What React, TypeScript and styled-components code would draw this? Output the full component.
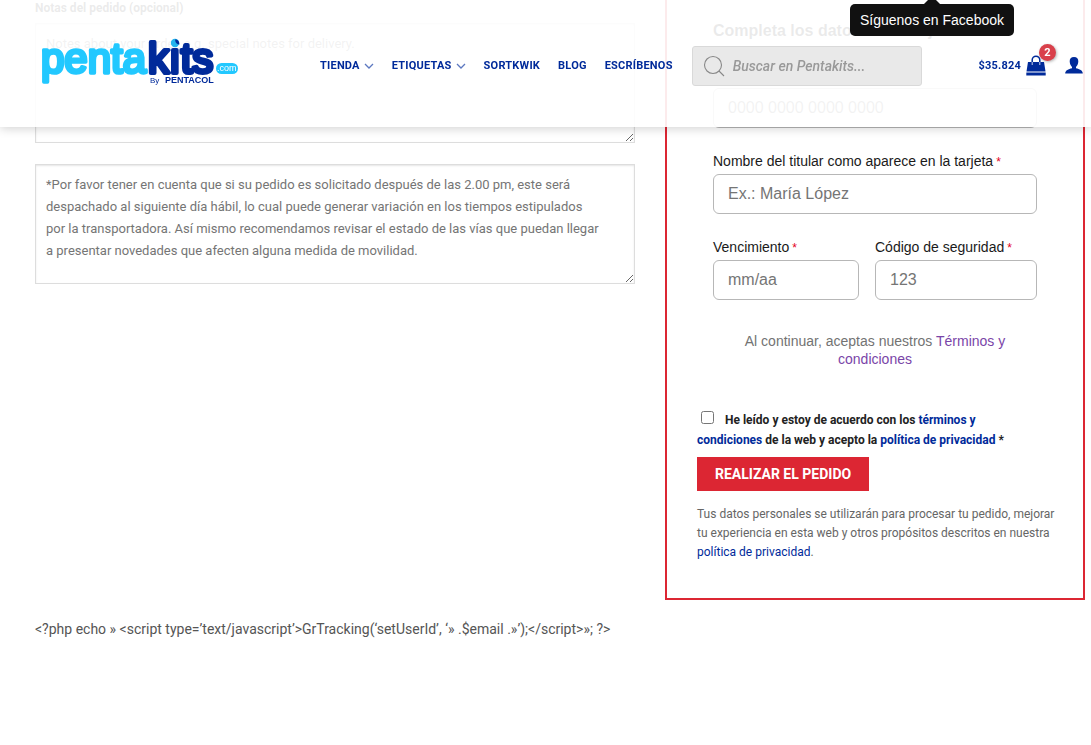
import React from "react";
import styled, { createGlobalStyle } from "styled-components";

const navy = "#002a9a";
const red = "#dc2633";
const sans = `"Liberation Sans", Arial, sans-serif`;

const GlobalStyle = createGlobalStyle`
  *, *::before, *::after { box-sizing: border-box; }
  body {
    margin: 0;
    background: #fff;
    color: #666;
    font: 14px/22px Roboto, sans-serif;
  }
  a { color: ${navy}; text-decoration: none; }
`;

const Header = styled.header`
  position: fixed;
  inset: 0 0 auto 0;
  z-index: 2;
  height: 127px;
  padding: 4px 8px 0 41px;
  display: flex;
  align-items: center;
  background: rgba(255, 255, 255, 0.91);
  box-shadow: 0 1px 10px rgba(0, 0, 0, 0.2);
`;

const LogoLink = styled.a`
  flex: none;
  width: 200px;
  height: 55px;
  margin-right: 79px;
  svg { display: block; overflow: visible; }
`;

const Nav = styled.nav`
  display: flex;
  gap: 18px;
`;

const NavLink = styled.a`
  display: flex;
  align-items: center;
  gap: 4px;
  font-size: 11px;
  line-height: 16px;
  font-weight: 700;
  letter-spacing: 0.02em;
  white-space: nowrap;
`;

const Search = styled.form`
  flex: none;
  display: flex;
  align-items: center;
  gap: 8px;
  width: 230px;
  height: 40px;
  margin-left: 19px;
  padding: 0 10px;
  background: #e9e9e9;
  border: 1px solid #d9d9d9;
  border-radius: 3px;
`;

const SearchInput = styled.input`
  flex: 1;
  min-width: 0;
  border: 0;
  padding: 0;
  background: transparent;
  font: italic 500 14px/20px Roboto, sans-serif;
  &::placeholder { color: #999; opacity: 1; }
`;

const Account = styled.div`
  display: flex;
  align-items: center;
  gap: 19px;
  margin-left: auto;
  svg { display: block; }
`;

const Cart = styled.a`
  position: relative;
  display: flex;
  align-items: center;
  gap: 5px;
  font-size: 11px;
  font-weight: 700;
  letter-spacing: 0.02em;
`;

const Badge = styled.span`
  position: absolute;
  top: -11px;
  right: -10px;
  width: 17px;
  height: 17px;
  border-radius: 50%;
  background: #d9404b;
  box-shadow: 1px 1px 3px rgba(0, 0, 0, 0.3);
  color: #fff;
  font-size: 11px;
  line-height: 17px;
  text-align: center;
`;

const Tooltip = styled.div`
  position: fixed;
  top: 4px;
  right: 77px;
  z-index: 3;
  padding: 5px 10px;
  border-radius: 5px;
  background: #111;
  color: #fff;
  font: 14px/22px ${sans};
  &::before {
    content: "";
    position: absolute;
    left: 50%;
    top: -8px;
    margin-left: -8px;
    border: 8px solid transparent;
    border-top: 0;
    border-bottom-color: #111;
  }
`;

const Columns = styled.main`
  display: grid;
  grid-template-columns: minmax(0, 1fr) 420px;
  gap: 30px;
  padding: 0 6px 0 35px;
`;

const Notes = styled.section`
  display: flex;
  flex-direction: column;
`;

const NotesLabel = styled.label`
  font-size: 12px;
  line-height: 16px;
  font-weight: 700;
  color: #222;
  margin-bottom: 7px;
`;

const NotesArea = styled.textarea`
  display: block;
  width: 100%;
  height: 120px;
  margin-bottom: 21px;
  padding: 9px 10px;
  border: 1px solid #ddd;
  border-radius: 0;
  box-shadow: inset 0 1px 2px rgba(0, 0, 0, 0.1);
  background: #fff;
  font: 13px/22px Roboto, sans-serif;
  resize: vertical;
  &::placeholder { color: #757575; }
`;

const OrderBox = styled.section`
  padding: 0 30px 36px;
  border: 2px solid ${red};
  border-top: 0;
`;

const Card = styled.div`
  padding: 20px 16px 0;
  font: 14px/18px ${sans};
  color: #1a1a1a;
`;

const CardTitle = styled.h3`
  margin: 0 0 47px;
  font-size: 16px;
  line-height: 21px;
  font-weight: 700;
  white-space: nowrap;
`;

const Field = styled.div`
  display: flex;
  flex-direction: column;
  gap: 4px;
  margin-bottom: 24px;
`;

const Pair = styled.div`
  display: grid;
  grid-template-columns: 146px 1fr;
  gap: 16px;
`;

const Required = styled.span`
  margin-left: 3px;
  color: #e3001b;
  font-size: 12px;
  line-height: 1;
`;

const CardInput = styled.input`
  width: 100%;
  height: 40px;
  padding: 0 14px;
  border: 1px solid #b7b7b7;
  border-radius: 6px;
  background: #fff;
  font: 16px/20px ${sans};
  &::placeholder { color: #757575; opacity: 1; }
`;

const CardTerms = styled.p`
  margin: 8px 0 0;
  padding: 0 24px;
  text-align: center;
  color: #737373;
  a { color: #7a45a8; }
`;

const Accept = styled.label`
  display: block;
  margin-top: 42px;
  padding-right: 40px;
  font-size: 12px;
  line-height: 20px;
  font-weight: 700;
  color: #222;
`;

const Check = styled.input`
  width: 13px;
  height: 13px;
  margin: 0 11px 0 4px;
`;

const OrderButton = styled.button`
  display: block;
  height: 34px;
  margin: 7px 0 14px;
  padding: 0 18px;
  border: 0;
  background: ${red};
  color: #fff;
  font: 700 14px/34px Roboto, sans-serif;
`;

const Privacy = styled.p`
  margin: 0 -4px 0 0;
  font-size: 12px;
  line-height: 19px;
`;

const Trace = styled.p`
  margin: 18px 0 0;
  padding: 0 35px;
  color: #555;
`;

const Logo = () => (
  <svg width="200" height="55" viewBox="0 0 200 55" role="img" aria-label="Pentakits">
    <g fontFamily="Liberation Sans, Arial, sans-serif" strokeLinejoin="round">
      <text x="0" y="35" fontSize="42" fill="#22c8ff" stroke="#22c8ff" strokeWidth="3.5">penta</text>
      <text x="107" y="35" fontSize="42" fill={navy} stroke={navy} strokeWidth="4">kıts</text>
      <circle cx="134" cy="5" r="4.2" fill="#22b4ee" />
      <path d="M134 1.500q4-.5 4.500 5-4 0-4.500-5z" fill={navy} />
      <rect x="175" y="25" width="22" height="11" rx="5.500" fill="#22c8ff" />
      <text x="176" y="33" fontSize="9" fill="#fff">.com</text>
      <text x="109" y="45" fontSize="8" fill={navy}>By</text>
      <text x="124" y="45" fontSize="9" fontWeight="700" fill={navy}>PENTACOL</text>
    </g>
  </svg>
);

const Chevron = () => (
  <svg width="10" height="6" viewBox="0 0 10 6" fill="none" stroke="#5c78c0" strokeWidth="1.3" aria-hidden="true">
    <path d="M1 1l4 4 4-4" />
  </svg>
);

const SearchIcon = () => (
  <svg width="22" height="22" viewBox="0 0 22 22" fill="none" stroke="#888" strokeWidth="1.1" aria-hidden="true">
    <circle cx="10" cy="10" r="8.5" />
    <path d="M16 16l5 5" />
  </svg>
);

const BagIcon = () => (
  <svg width="20" height="21" viewBox="0 0 20 21" aria-hidden="true">
    <path d="M6.200 9V5a3.800 3.800 0 0 1 7.600 0v4" fill="none" stroke={navy} strokeWidth="1.500" />
    <path d="M2 7h16l1.500 9.500H.5z" fill={navy} />
    <path d="M.3 17.500h19.400v3H.3z" fill={navy} />
    <path d="M6.200 7v3M13.800 7v3" stroke="#fff" strokeWidth=".8" />
  </svg>
);

const UserIcon = () => (
  <svg width="18" height="17" viewBox="0 0 18 17" fill={navy} aria-hidden="true">
    <path d="M9 0c3 0 4.500 2 4.300 4.700C13.100 7.300 12 9 11 9.900v1.300c3.500 1 6.600 1.800 6.800 5.300H.2c.2-3.500 3.300-4.300 6.800-5.300V9.900C6 9 4.900 7.300 4.700 4.700 4.500 2 6 0 9 0z" />
  </svg>
);

type CardFieldProps = { id: string; label: string; placeholder: string };

const CardField = ({ id, label, placeholder }: CardFieldProps) => (
  <Field>
    <label htmlFor={id}>{label}<Required>*</Required></label>
    <CardInput id={id} placeholder={placeholder} />
  </Field>
);

const menu = [
  { label: "TIENDA", more: true },
  { label: "ETIQUETAS", more: true },
  { label: "SORTKWIK" },
  { label: "BLOG" },
  { label: "ESCRÍBENOS" },
];

const notice = [
  "*Por favor tener en cuenta que si su pedido es solicitado después de las 2.00 pm, este será",
  "despachado al siguiente día hábil, lo cual puede generar variación en los tiempos estipulados",
  "por la transportadora. Así mismo recomendamos revisar el estado de las vías que puedan llegar",
  "a presentar novedades que afecten alguna medida de movilidad.",
].join("\n");

export default function App() {
  return (
    <>
      <GlobalStyle />
      <Header>
        <LogoLink href="#"><Logo /></LogoLink>
        <Nav>
          {menu.map((m) => (
            <NavLink href="#" key={m.label}>{m.label}{m.more && <Chevron />}</NavLink>
          ))}
        </Nav>
        <Search>
          <SearchIcon />
          <SearchInput type="search" aria-label="Buscar" placeholder="Buscar en Pentakits..." />
        </Search>
        <Account>
          <Cart href="#">$35.824<BagIcon /><Badge>2</Badge></Cart>
          <a href="#" aria-label="Mi cuenta"><UserIcon /></a>
        </Account>
      </Header>
      <Tooltip role="tooltip">Síguenos en Facebook</Tooltip>

      <Columns>
        <Notes>
          <NotesLabel htmlFor="notes">Notas del pedido (opcional)</NotesLabel>
          <NotesArea id="notes" placeholder="Notes about your order, e.g. special notes for delivery." />
          <NotesArea aria-label="Aviso de despacho" placeholder={notice} />
        </Notes>
        <OrderBox>
          <Card>
            <CardTitle>Completa los datos de tu tarjeta</CardTitle>
            <Field>
              <CardInput aria-label="Número de tarjeta" placeholder="0000 0000 0000 0000" />
            </Field>
            <CardField id="holder" label="Nombre del titular como aparece en la tarjeta" placeholder="Ex.: María López" />
            <Pair>
              <CardField id="expiry" label="Vencimiento" placeholder="mm/aa" />
              <CardField id="code" label="Código de seguridad" placeholder="123" />
            </Pair>
            <CardTerms>Al continuar, aceptas nuestros <a href="#">Términos y condiciones</a></CardTerms>
          </Card>
          <Accept>
            <Check type="checkbox" />
            He leído y estoy de acuerdo con los <a href="#">términos y condiciones</a> de la web y acepto la <a href="#">política de privacidad</a> *
          </Accept>
          <OrderButton type="button">REALIZAR EL PEDIDO</OrderButton>
          <Privacy>
            Tus datos personales se utilizarán para procesar tu pedido, mejorar tu experiencia en esta web y otros propósitos descritos en nuestra <a href="#">política de privacidad</a>.
          </Privacy>
        </OrderBox>
      </Columns>
      <Trace>{"<?php echo » <script type=’text/javascript’>GrTracking(‘setUserId’, ‘» .$email .»’);</script>»; ?>"}</Trace>
    </>
  );
}
